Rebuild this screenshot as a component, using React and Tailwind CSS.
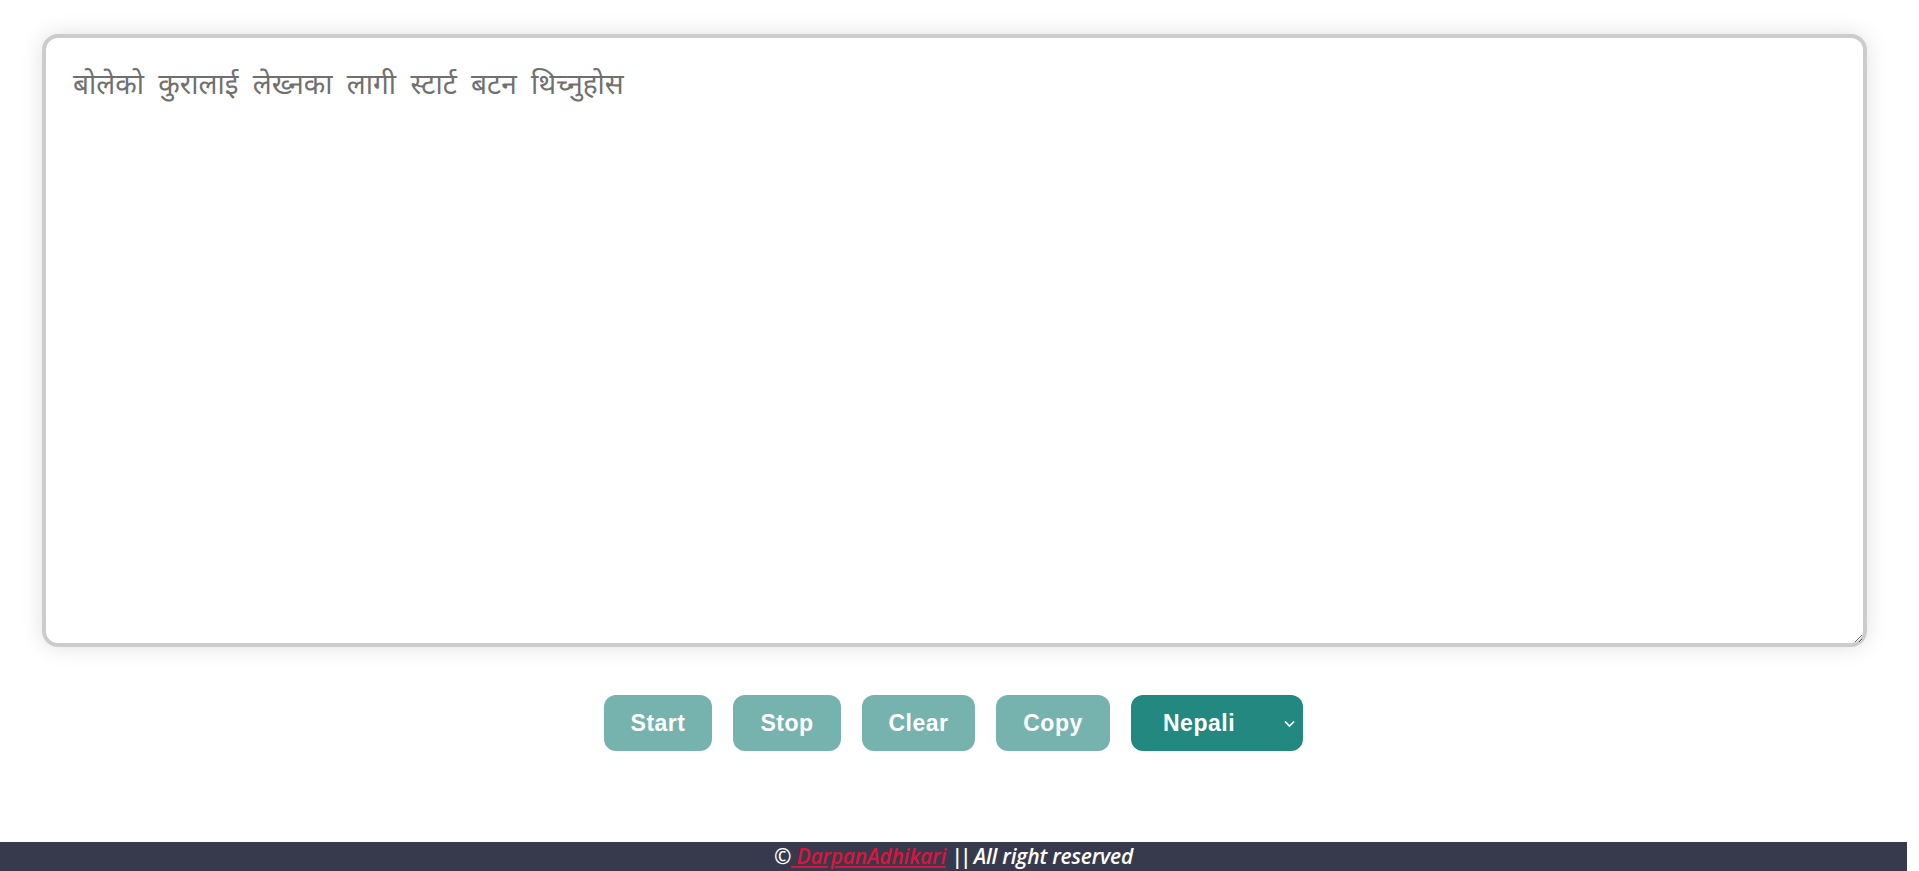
import { useState } from "react";

const ActionButton = ({ label, width, onClick }) => {
  return (
    <button
      type="button"
      onClick={onClick}
      className={`${width} h-[56px] rounded-[12px] bg-[#76b3af] text-white text-[23px] font-bold tracking-[0.5px] font-['Liberation_Sans',Arial,sans-serif]`}
    >
      {label}
    </button>
  );
};

const App = () => {
  const [text, setText] = useState("");
  const [lang, setLang] = useState("ne-NP");

  return (
    <div className="w-[1907px] min-h-[871px] flex flex-col bg-white">
      <div className="pt-[34px] pl-[42px]">
        <textarea
          value={text}
          onChange={(e) => setText(e.target.value)}
          placeholder="बोलेको कुरालाई लेख्नका लागी स्टार्ट बटन थिच्नुहोस"
          className="block w-[1825px] h-[613px] border-4 border-[#cccccc] rounded-[16px] bg-white pl-[27px] pr-[27px] pt-[28px] pb-[18px] text-[28px] [word-spacing:7px] text-[#444] placeholder:text-[#707070] outline-none shadow-[0_0_22px_rgba(0,0,0,0.12)] font-['Noto_Sans_Devanagari','Noto_Sans','Liberation_Sans',sans-serif]"
        />
      </div>

      <div className="mt-[48px] flex justify-center gap-[21px]">
        <ActionButton label="Start" width="w-[108px]" />
        <ActionButton label="Stop" width="w-[108px]" />
        <ActionButton label="Clear" width="w-[113px]" />
        <ActionButton label="Copy" width="w-[114px]" />
        <div className="relative">
          <select
            value={lang}
            onChange={(e) => setLang(e.target.value)}
            className="appearance-none h-[56px] w-[172px] pl-[32px] pr-[40px] rounded-[12px] bg-[#238880] text-white text-[23px] font-bold tracking-[0.5px] outline-none font-['Liberation_Sans',Arial,sans-serif]"
          >
            <option value="ne-NP">Nepali</option>
            <option value="en-US">English</option>
          </select>
          <svg
            className="absolute right-[7px] top-[24px] pointer-events-none"
            width="13"
            height="9"
            viewBox="0 0 13 9"
            fill="none"
          >
            <path d="M2 2.5l4.5 4.5 4.5-4.5" stroke="white" strokeWidth="1.7" />
          </svg>
        </div>
      </div>

      <footer className="mt-auto h-[29px] bg-[#373a4d] flex items-center justify-center">
        <p className="text-white text-[21px] font-semibold italic font-['Open_Sans','Noto_Sans',sans-serif] leading-none tracking-[-0.2px]">
          ©
          <a href="#" className="text-[#dc143c] underline">
            {" "}DarpanAdhikari
          </a>{" "}
          <span className="tracking-[-3px]">||</span> All right reserved
        </p>
      </footer>
    </div>
  );
};

export default App;
